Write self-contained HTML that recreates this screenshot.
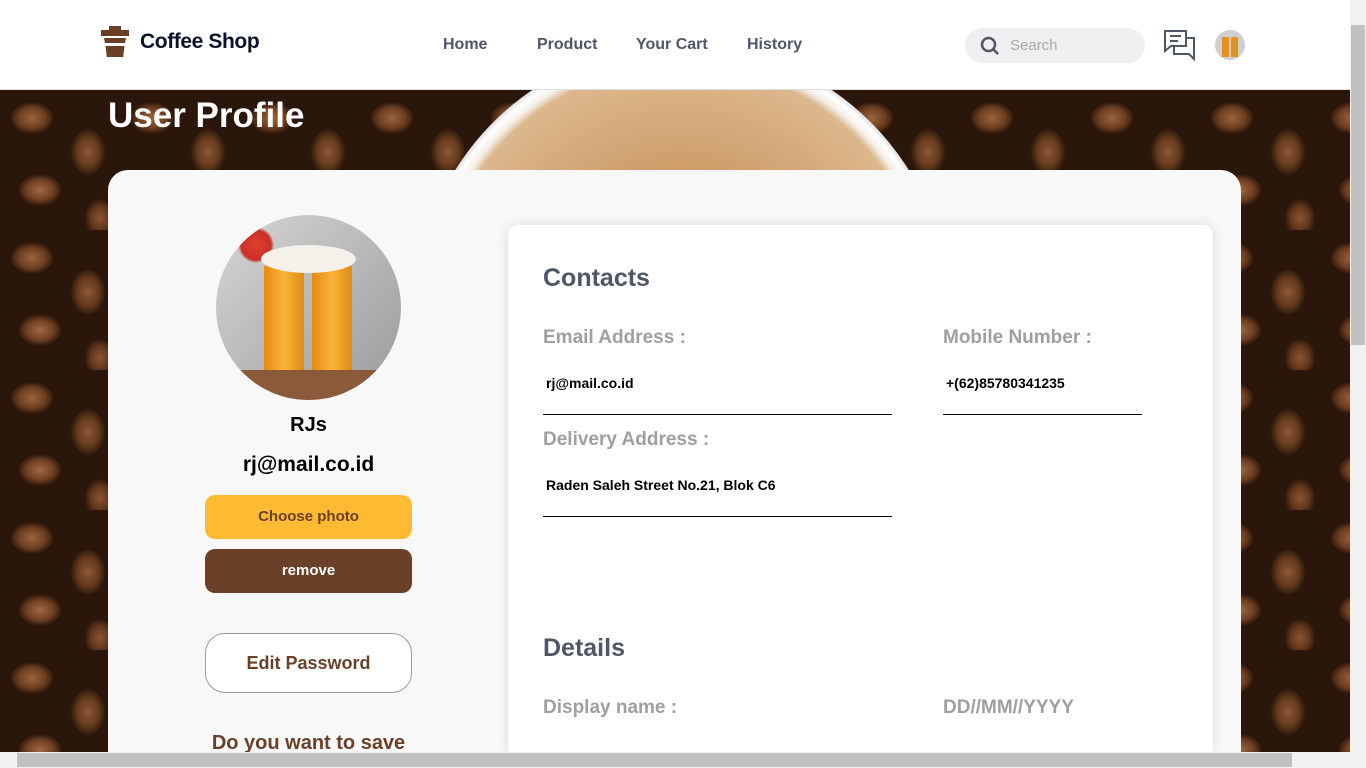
<!DOCTYPE html>
<html><head><meta charset="utf-8"><style>
*{box-sizing:border-box;margin:0;padding:0}
html,body{width:1366px;height:768px;overflow:hidden}
body{font-family:"Liberation Sans",sans-serif;background:#fff;position:relative}
.nav{position:absolute;left:0;top:0;width:1350px;height:90px;background:#fff;border-bottom:1px solid #ddd;z-index:2}
.logo{position:absolute;left:140px;top:30px;font-size:21px;font-weight:bold;color:#0b132a;letter-spacing:-0.4px}
.links a{position:absolute;top:36px;font-size:16px;font-weight:bold;color:#4f5665;text-decoration:none}
.search{position:absolute;left:965px;top:28px;width:180px;height:35px;border-radius:18px;background:#efeef0}
.search span{position:absolute;left:45px;top:9px;font-size:15px;color:#aaa}
.hero{position:absolute;left:0;top:90px;width:1350px;height:662px;background-color:#2a160b;
background-image:
radial-gradient(ellipse 30px 22px at 32px 28px,#9a6540 0,#6e3f20 45%,#3c2010 68%,transparent 72%),
radial-gradient(ellipse 24px 32px at 88px 62px,#8d5a36 0,#64381b 45%,#36200f 68%,transparent 72%),
radial-gradient(ellipse 30px 22px at 40px 100px,#a06a44 0,#704021 45%,#3c2010 68%,transparent 72%),
radial-gradient(ellipse 22px 28px at 100px 128px,#8a5532 0,#5e341a 45%,transparent 70%);
background-size:120px 140px}
.cupwrap{position:absolute;left:0;top:90px;width:1350px;height:80px;overflow:hidden}
.cup{position:absolute;left:415px;top:-46px;width:534px;height:534px;border-radius:50%;background:radial-gradient(circle closest-side,#c08a55 0,#cf9f6c 55%,#dcb88d 92%,#f4efe8 95%,#fff 98%,#ddd 100%)}
h1{position:absolute;left:108px;top:96px;font-size:35px;color:#fff;font-weight:bold}
.card{position:absolute;left:108px;top:170px;width:1133px;height:582px;background:#f8f8f8;border-radius:20px 20px 0 0}
.avatar{position:absolute;left:216px;top:215px;width:185px;height:185px;border-radius:50%;overflow:hidden;background:linear-gradient(135deg,#d6d6d6,#9a9a9a)}
.ctr{position:absolute;left:205px;width:207px;text-align:center;font-weight:bold}
.btn{position:absolute;left:205px;width:207px;height:44px;border-radius:10px;text-align:center;line-height:44px;font-size:15px;font-weight:bold}
.panel{position:absolute;left:508px;top:225px;width:705px;height:527px;background:#fff;border-radius:10px 10px 0 0;box-shadow:0 0 12px rgba(0,0,0,.12)}
.h2{position:absolute;font-size:25px;font-weight:bold;color:#4f5665}
.lab{position:absolute;font-size:19px;font-weight:bold;color:#9f9f9f}
.val{position:absolute;font-size:14px;font-weight:bold;color:#000}
.line{position:absolute;height:1px;background:#000}
.vs{position:absolute;left:1350px;top:0;width:16px;height:752px;background:#f1f1f1;z-index:3}
.hs{position:absolute;left:0;top:752px;width:1366px;height:16px;background:#f1f1f1;z-index:3}
</style></head><body>
<div class="nav">
<svg style="position:absolute;left:101px;top:26px" width="28" height="32" viewBox="0 0 28 32"><rect x="8" y="0" width="12" height="4" fill="#6a3f23"/><rect x="0" y="4" width="28" height="6" fill="#6a3f23"/><path d="M3 12h22l-1 5H4z M4.5 20h19l-1.3 11H5.8z" fill="#6a3f23"/></svg>
<div class="logo">Coffee Shop</div>
<div class="links"><a style="left:443px">Home</a><a style="left:537px">Product</a><a style="left:636px">Your Cart</a><a style="left:747px">History</a></div>
<div class="search"><svg style="position:absolute;left:15px;top:8px" width="20" height="20" viewBox="0 0 20 20"><circle cx="8.5" cy="8.5" r="6.5" stroke="#4f5665" stroke-width="2.5" fill="none"/><path d="M13 13l5 5" stroke="#4f5665" stroke-width="2.5"/></svg><span>Search</span></div>
<svg style="position:absolute;left:1164px;top:30px" width="32" height="31" viewBox="0 0 32 31" fill="none" stroke="#4f5665" stroke-width="2"><path d="M1 1h21v15H7l-6 5z"/><path d="M22 8h8v15l0 6-5-5H10v-8"/><path d="M6 6h11M6 11h8"/></svg>
<div style="position:absolute;left:1215px;top:30px;width:30px;height:30px;border-radius:50%;overflow:hidden;background:#cfcfcf"><div style="position:absolute;left:7px;top:7px;width:7px;height:20px;background:#e8901e"></div><div style="position:absolute;left:16px;top:7px;width:7px;height:20px;background:#e8901e"></div></div>
</div>
<div class="hero"></div>
<div class="cupwrap"><div class="cup"></div></div>
<h1>User Profile</h1>
<div class="card"></div>
<div class="avatar"><div style="position:absolute;left:0;top:0;width:60px;height:60px;background:radial-gradient(circle at 40px 30px,#e0402a 0,#c8302a 15px,transparent 18px)"></div><div style="position:absolute;left:48px;top:50px;width:40px;height:120px;background:linear-gradient(90deg,#e88a10,#f6b338,#e08a12);border-radius:3px"></div><div style="position:absolute;left:96px;top:50px;width:40px;height:120px;background:linear-gradient(90deg,#e88a10,#f6b338,#e08a12);border-radius:3px"></div><div style="position:absolute;left:45px;top:30px;width:95px;height:28px;background:#f4f0ea;border-radius:50%"></div><div style="position:absolute;left:0;top:155px;width:185px;height:30px;background:#8a5a3a"></div></div>
<div class="ctr" style="top:414px;font-size:20px">RJs</div>
<div class="ctr" style="top:453px;font-size:21px">rj@mail.co.id</div>
<div class="btn" style="top:495px;background:#ffba33;color:#6a4029">Choose photo</div>
<div class="btn" style="top:549px;background:#6a4029;color:#fff">remove</div>
<div class="btn" style="top:633px;height:60px;line-height:58px;background:#fff;border:1px solid #999;border-radius:20px;color:#6a4029;font-size:18px">Edit Password</div>
<div class="ctr" style="top:732px;font-size:20px;color:#6a4029;white-space:nowrap">Do you want to save</div>
<div class="panel"></div>
<div class="h2" style="left:543px;top:264px">Contacts</div>
<div class="lab" style="left:543px;top:327px">Email Address :</div>
<div class="lab" style="left:943px;top:327px">Mobile Number :</div>
<div class="val" style="left:546px;top:375px">rj@mail.co.id</div>
<div class="val" style="left:946px;top:375px">+(62)85780341235</div>
<div class="line" style="left:543px;top:414px;width:349px"></div>
<div class="line" style="left:943px;top:414px;width:199px"></div>
<div class="lab" style="left:543px;top:429px">Delivery Address :</div>
<div class="val" style="left:546px;top:477px">Raden Saleh Street No.21, Blok C6</div>
<div class="line" style="left:543px;top:516px;width:349px"></div>
<div class="h2" style="left:543px;top:634px">Details</div>
<div class="lab" style="left:543px;top:697px">Display name :</div>
<div class="lab" style="left:943px;top:697px">DD//MM//YYYY</div>
<div class="vs"><div style="position:absolute;left:1px;top:25px;width:14px;height:320px;background:#c1c1c1"></div></div>
<div class="hs"><div style="position:absolute;left:17px;top:1px;width:1275px;height:14px;background:#c1c1c1"></div></div>
</body></html>
